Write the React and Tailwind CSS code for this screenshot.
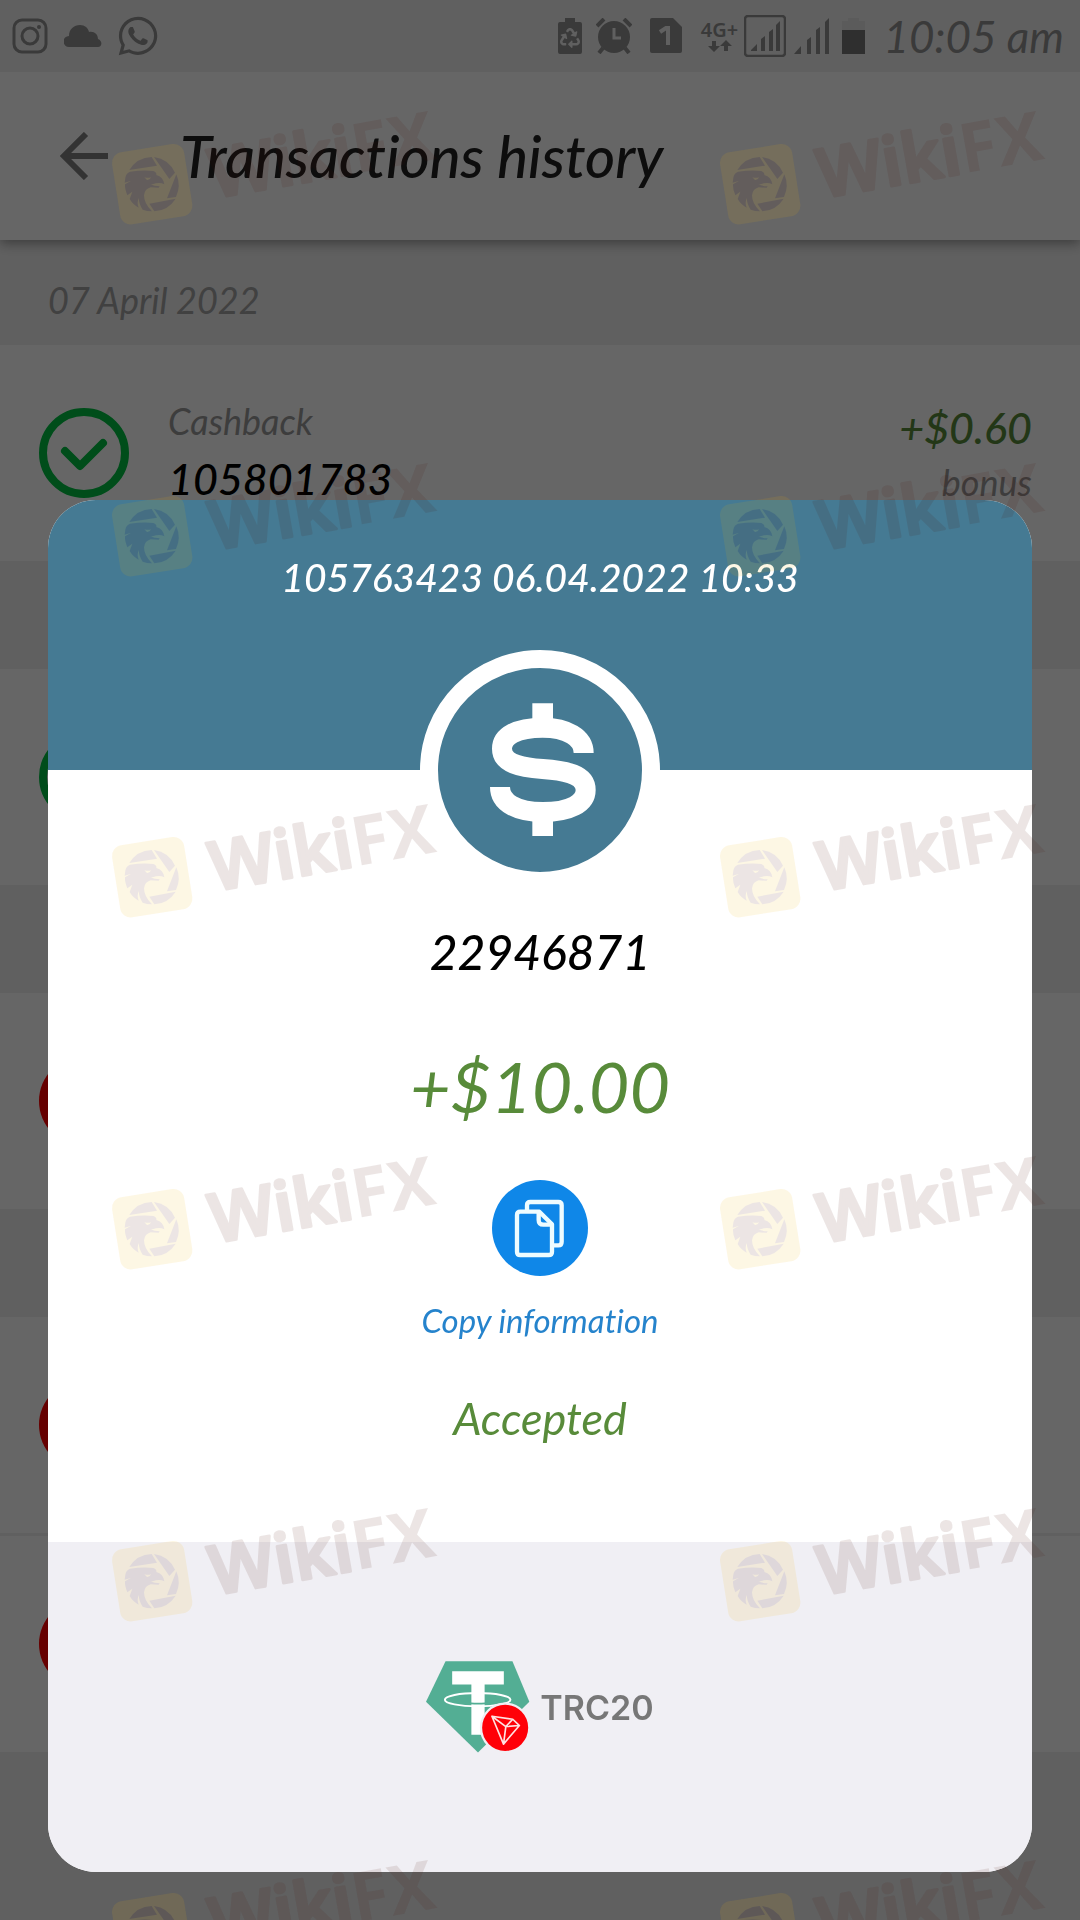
import { FaRecycle, FaWhatsapp } from "react-icons/fa";

const ROWS = [
  {
    id: 1,
    status: "accepted",
    type: "Cashback",
    number: "105801783",
    amount: "+$0.60",
    note: "bonus",
    gap: "mb-[108px]",
  },
  { id: 2, status: "accepted", gap: "mb-[108px]" },
  { id: 3, status: "rejected", gap: "mb-[108px]" },
  { id: 4, status: "rejected", gap: "mb-[3px]" },
  { id: 5, status: "rejected", gap: "mb-0" },
];

function StatusBar() {
  return (
    <div className="relative z-10 flex h-[72px] items-center justify-between bg-[#f0f0f0] pr-4 pl-3 text-[#919191]">
      <div className="flex items-center gap-4">
        <svg className="size-9" viewBox="0 0 36 36" fill="none" stroke="currentColor" strokeWidth="3">
          <rect x="2" y="2" width="32" height="32" rx="8" />
          <circle cx="18" cy="18" r="8" />
          <circle cx="27" cy="9" r="2" fill="currentColor" stroke="none" />
        </svg>
        <svg className="h-[22px] w-[38px]" viewBox="0 0 38 22" fill="currentColor">
          <path d="M5 22a5 5 0 0 1 0-11C5 4 10 0 16 0c5 0 8 3 9 7 5-1 9 2 9 7C39 16 38 22 34 22Z" />
        </svg>
        <FaWhatsapp className="-ml-0.5 size-11" />
      </div>

      <div className="flex items-center gap-2">
        <div className="relative mr-1.5">
          <svg className="h-9 w-6" viewBox="0 0 24 36" fill="currentColor">
            <path d="M7 0h10v4h5q2 0 2 2v28q0 2-2 2H2q-2 0-2-2V6q0-2 2-2h5Z" />
          </svg>
          <FaRecycle className="absolute top-[10px] left-[2px] size-5 text-[#f0f0f0]" />
        </div>
        <svg className="h-9 w-9" viewBox="0 0 36 36" fill="currentColor">
          <circle cx="18" cy="19" r="16" />
          <path d="m1 8 7-7M35 8l-7-7M7 30l-4 5M29 30l4 5" stroke="currentColor" strokeWidth="4" />
          <path d="M18 10v10h7" fill="none" stroke="#f0f0f0" strokeWidth="3" />
        </svg>
        <svg className="ml-2.5 h-9 w-8" viewBox="0 0 32 36" fill="currentColor">
          <path d="M2 0h21l9 9v24q0 2-2 2H2q-2 0-2-2V2q0-2 2-2Z" />
          <path d="M10 14l6-4h2v17" fill="none" stroke="#f0f0f0" strokeWidth="4" />
        </svg>
        <div className="-mr-1 ml-2.5 flex w-10 flex-col items-center">
          <span className="font-['Noto_Sans',sans-serif] text-[20px] leading-[20px] font-semibold">4G+</span>
          <svg className="h-3 w-6" viewBox="0 0 24 12" fill="currentColor">
            <path d="M4 1h4v5h4l-6 6-6-6h4ZM16 11h4V6h4l-6-6-6 6h4Z" />
          </svg>
        </div>
        <svg className="h-[42px] w-[42px]" viewBox="0 0 42 42" fill="currentColor">
          <rect x="1" y="1" width="40" height="40" rx="3" fill="none" stroke="currentColor" strokeWidth="2.5" />
          <path d="M7 36v-1l6-6v7ZM17 24l4-3v15h-4ZM25 17l4-3v22h-4ZM32 10l4-4v30h-4Z" />
        </svg>
        <svg className="h-9 w-9" viewBox="0 0 36 36" fill="currentColor">
          <path d="M0 36l7-8v8ZM13 22l4-3v17h-4ZM22 12l4-3v27h-4ZM31 4l4-4v36h-4Z" />
        </svg>
        <svg className="ml-1 h-9 w-6" viewBox="0 0 24 36">
          <path d="M6 0h11v3h6v9H0V3h6Z" fill="#e4e4e4" />
          <path d="M0 12h23v24H0Z" fill="#767676" />
        </svg>
        <span className="ml-2.5 text-[44px] leading-[56px] italic">10:05 am</span>
      </div>
    </div>
  );
}

function StatusIcon({ status }) {
  if (status === "accepted") {
    return (
      <svg className="size-[90px] shrink-0" viewBox="0 0 90 90" fill="none" stroke="#00c043">
        <circle cx="45" cy="45" r="41" strokeWidth="8" />
        <path d="M26 43l15 15 23-23" strokeWidth="8" strokeLinecap="round" strokeLinejoin="round" />
      </svg>
    );
  }
  return (
    <svg className="size-[90px] shrink-0" viewBox="0 0 90 90">
      <circle cx="45" cy="45" r="45" fill="#ff0000" />
      <path d="M31 31l28 28M59 31L31 59" stroke="#fff" strokeWidth="8" strokeLinecap="round" />
    </svg>
  );
}

function HistoryRow({ row }) {
  return (
    <li className={`flex h-[216px] items-center gap-[39px] bg-white pr-12 pl-[39px] ${row.gap}`}>
      <StatusIcon status={row.status} />
      {row.type && (
        <>
          <div className="grow pb-1.5 leading-[58px] italic">
            <p className="text-[36px] text-[#999999]">{row.type}</p>
            <p className="text-[43px] font-medium text-black">{row.number}</p>
          </div>
          <div className="pt-1 text-right leading-[54px] italic">
            <p className="text-[43px] font-medium text-[#588b3a]">{row.amount}</p>
            <p className="text-[36px] text-[#999999]">{row.note}</p>
          </div>
        </>
      )}
    </li>
  );
}

function DollarIcon() {
  return (
    <svg className="size-[204px]" viewBox="114 114 612 612">
      <path
        d="M551 369C551 322 500 293 428 293C350 293 306 318 306 356C306 400 360 412 428 417C500 422 557 434 557 480C557 520 510 546 428 546C350 546 300 518 300 471"
        fill="none"
        stroke="#fff"
        strokeWidth="60"
      />
      <path d="M397 220h62v60h-62ZM397 560h62v58h-62Z" fill="#fff" />
    </svg>
  );
}

function CopyIcon() {
  return (
    <svg
      className="size-24"
      viewBox="276 60 288 288"
      fill="none"
      stroke="#eefcff"
      strokeWidth="13"
      strokeLinejoin="round"
    >
      <path d="M381 155V136Q381 126 391 126H475Q485 126 485 136V245Q485 256 475 256H458" />
      <path d="M351 165Q351 155 361 155H418L456 193V275Q456 285 446 285H361Q351 285 351 275Z" />
      <path d="M416 157V180Q416 194 430 194H456" />
    </svg>
  );
}

function TetherIcon() {
  return (
    <svg className="h-[92px] w-[104px]" viewBox="78 93 314 276">
      <path d="M137 93H339L390 215L235 368L78 215Z" fill="#53ae94" />
      <ellipse cx="234" cy="209" rx="99" ry="20" fill="none" stroke="#fff" strokeWidth="6" />
      <path d="M157 123H313V163H255V315H215V163H157Z" fill="#fff" />
      <path d="M213 220q21 2 44 0" stroke="#53ae94" strokeWidth="5" fill="none" />
      <circle cx="317" cy="294" r="73" fill="#ff0008" stroke="#f0eff4" strokeWidth="7" />
      <path
        d="M277 259L340 268L360 287L312 343ZM277 259L319 290L360 287M340 268L319 290L312 343"
        fill="none"
        stroke="#ffe3e3"
        strokeWidth="5"
        strokeLinejoin="round"
      />
    </svg>
  );
}

function Mark() {
  return (
    <svg className="h-[160px] w-[360px] shrink-0 opacity-10" viewBox="0 0 1080 480">
      <rect x="77" y="182" width="219" height="219" rx="32" fill="#f0b400" transform="rotate(-9 187 291)" />
      <g fill="#4b0f00">
        <path d="M118 249L201 236L185 210A82 82 0 0 0 118 249Z" />
        <path d="M192 210A82 82 0 0 1 255 257L238 276Z" />
        <path d="M259 262A82 82 0 0 1 258 330L231 334Z" />
        <path d="M178 350L257 335A82 82 0 0 1 193 373Z" />
        <path d="M106 272Q108 258 120 254Q160 248 190 252Q201 257 199 264Q220 270 223 292Q212 286 198 289Q188 293 180 292Q194 298 209 298L206 302Q192 302 182 301Q164 306 162 325Q162 350 186 373Q170 373 158 368Q147 352 146 333Q140 348 146 362Q128 352 119 336L127 314L112 325Q104 306 105 292L122 282L104 287Z" />
      </g>
      <path d="M163 271Q174 274 183 271Q180 280 171 279Z" fill="#f0b400" />
      <text
        x="372"
        y="334"
        fontSize="205"
        fontWeight="700"
        fontFamily="Noto Sans, sans-serif"
        fill="#4b0f00"
        transform="rotate(-10 372 334)"
      >
        <tspan fontWeight="600" stroke="#4b0f00" strokeWidth="9" strokeLinejoin="round">
          Wiki
        </tspan>
        <tspan>FX</tspan>
      </text>
    </svg>
  );
}

function MarkRow({ className }) {
  return (
    <div className={className}>
      <Mark />
      <Mark />
    </div>
  );
}

function Watermark() {
  return (
    <div className="pointer-events-none fixed inset-0 z-30 overflow-hidden pt-[87px] pl-[90px]" aria-hidden="true">
      <MarkRow className="flex h-[352px] gap-[248px]" />
      <MarkRow className="flex h-[341px] gap-[248px]" />
      <MarkRow className="flex h-[352px] gap-[248px]" />
      <MarkRow className="flex h-[352px] gap-[248px]" />
      <MarkRow className="flex h-[352px] gap-[248px]" />
      <MarkRow className="flex h-[352px] gap-[248px]" />
    </div>
  );
}

function DetailsDialog() {
  return (
    <div className="fixed inset-0 z-20 flex items-end bg-black/60 p-12">
      <div role="dialog" aria-label="Transaction" className="w-full overflow-hidden rounded-[48px] bg-white">
        <div className="h-[270px] bg-[#457a93] pt-[53px] text-center text-[39px] leading-[48px] font-medium text-white italic">
          105763423 06.04.2022 10:33
        </div>
        <div className="-mt-[120px] flex flex-col items-center pb-24">
          <div className="rounded-full border-[18px] border-white bg-[#457a93]">
            <DollarIcon />
          </div>
          <p className="mt-8 text-[48px] leading-[60px] font-medium text-black italic">22946871</p>
          <p className="mt-16 text-[70px] leading-[80px] text-[#588b3a] italic">+$10.00</p>
          <button className="mt-[54px] flex flex-col items-center gap-6">
            <span className="rounded-full bg-[#0f87e8]">
              <CopyIcon />
            </span>
            <span className="text-[33px] leading-[40px] text-[#2583cc] italic">Copy information</span>
          </button>
          <p className="mt-[50px] text-[45px] leading-[56px] text-[#588b3a] italic">Accepted</p>
        </div>
        <div className="flex items-center justify-center gap-2.5 bg-[#f0eff4] py-[119px]">
          <TetherIcon />
          <span className="font-['Inter',sans-serif] text-[34px] font-semibold text-[#777777]">TRC20</span>
        </div>
      </div>
    </div>
  );
}

function App() {
  return (
    <div className="h-screen overflow-hidden bg-[#f0f0f0] font-['Lato',sans-serif] [font-variant-ligatures:none]">
      <StatusBar />
      <header className="relative flex h-[168px] items-center gap-[72px] bg-white px-[60px] shadow-[0_3px_12px_rgba(0,0,0,0.4)]">
        <button aria-label="Back">
          <svg className="size-12" viewBox="0 0 48 48" fill="none" stroke="#808080" strokeWidth="6">
            <path d="M48 24H5M26 2L4 24l22 22" />
          </svg>
        </button>
        <h1 className="text-[58px] leading-[60px] font-medium text-[#222222] italic">Transactions history</h1>
      </header>
      <h2 className="h-[105px] px-12 pt-[36px] text-[36px] leading-[48px] text-[#a2a2a2] italic">07 April 2022</h2>
      <ul>
        {ROWS.map((row) => (
          <HistoryRow key={row.id} row={row} />
        ))}
      </ul>
      <DetailsDialog />
      <Watermark />
    </div>
  );
}

export default App;
